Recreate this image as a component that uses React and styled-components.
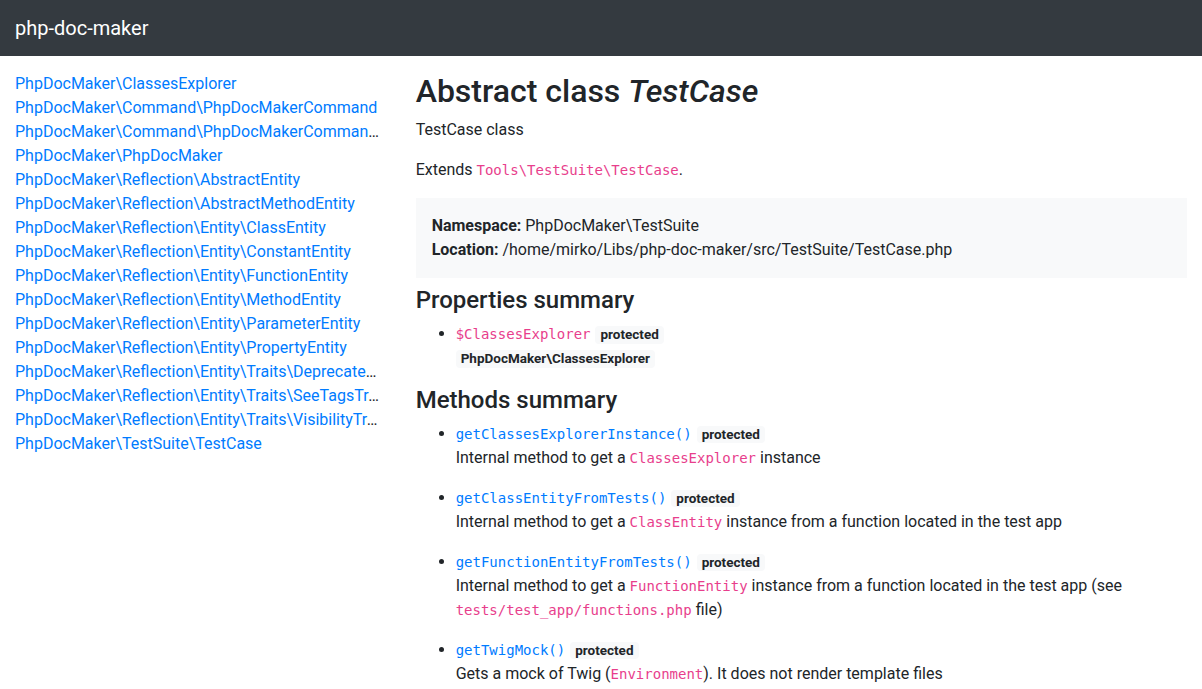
import styled, { createGlobalStyle } from "styled-components";

const GlobalStyle = createGlobalStyle`
html, body {
    margin: 0;
    padding: 0;
}
body {
    font-family: Roboto, "Liberation Sans", sans-serif;
    font-size: 16px;
    line-height: 1.5;
    color: #212529;
    background: #fff;
}
*, *::before, *::after {
    box-sizing: border-box;
}
`;

const classes = [
    "PhpDocMaker\\ClassesExplorer",
    "PhpDocMaker\\Command\\PhpDocMakerCommand",
    "PhpDocMaker\\Command\\PhpDocMakerCommandOptions",
    "PhpDocMaker\\PhpDocMaker",
    "PhpDocMaker\\Reflection\\AbstractEntity",
    "PhpDocMaker\\Reflection\\AbstractMethodEntity",
    "PhpDocMaker\\Reflection\\Entity\\ClassEntity",
    "PhpDocMaker\\Reflection\\Entity\\ConstantEntity",
    "PhpDocMaker\\Reflection\\Entity\\FunctionEntity",
    "PhpDocMaker\\Reflection\\Entity\\MethodEntity",
    "PhpDocMaker\\Reflection\\Entity\\ParameterEntity",
    "PhpDocMaker\\Reflection\\Entity\\PropertyEntity",
    "PhpDocMaker\\Reflection\\Entity\\Traits\\DeprecatedTrait",
    "PhpDocMaker\\Reflection\\Entity\\Traits\\SeeTagsTrait",
    "PhpDocMaker\\Reflection\\Entity\\Traits\\VisibilityTrait",
    "PhpDocMaker\\TestSuite\\TestCase",
];

const App = () => {
    return (
        <>
            <GlobalStyle />
            <Navbar>
                <Brand href="#">php-doc-maker</Brand>
            </Navbar>
            <Container>
                <Sidebar>
                    {classes.map((name) => (
                        <SideItem key={name}>
                            <SideLink href="#">{name}</SideLink>
                        </SideItem>
                    ))}
                </Sidebar>
                <Main>
                    <Title>Abstract class <em>TestCase</em></Title>
                    <P>TestCase class</P>
                    <P>Extends <Code>Tools\TestSuite\TestCase</Code>.</P>
                    <InfoBox>
                        <div><b>Namespace:</b> PhpDocMaker\TestSuite</div>
                        <div><b>Location:</b> /home/mirko/Libs/php-doc-maker/src/TestSuite/TestCase.php</div>
                    </InfoBox>

                    <Heading>Properties summary</Heading>
                    <List>
                        <li>
                            <Code>$ClassesExplorer</Code> <Badge>protected</Badge>
                            <div><Badge>PhpDocMaker\ClassesExplorer</Badge></div>
                        </li>
                    </List>

                    <Heading>Methods summary</Heading>
                    <List>
                        <li>
                            <MethodLink href="#"><Code>getClassesExplorerInstance()</Code></MethodLink> <Badge>protected</Badge>
                            <Desc>Internal method to get a <Code>ClassesExplorer</Code> instance</Desc>
                        </li>
                        <li>
                            <MethodLink href="#"><Code>getClassEntityFromTests()</Code></MethodLink> <Badge>protected</Badge>
                            <Desc>Internal method to get a <Code>ClassEntity</Code> instance from a function located in the test app</Desc>
                        </li>
                        <li>
                            <MethodLink href="#"><Code>getFunctionEntityFromTests()</Code></MethodLink> <Badge>protected</Badge>
                            <Desc>Internal method to get a <Code>FunctionEntity</Code> instance from a function located in the test app (see <Code>tests/test_app/functions.php</Code> file)</Desc>
                        </li>
                        <li>
                            <MethodLink href="#"><Code>getTwigMock()</Code></MethodLink> <Badge>protected</Badge>
                            <Desc>Gets a mock of Twig (<Code>Environment</Code>). It does not render template files</Desc>
                        </li>
                    </List>
                </Main>
            </Container>
        </>
    );
}

const Navbar = styled.nav`
height: 56px;
background: #343a40;
display: flex;
align-items: center;
padding: 0 15px;
`;

const Brand = styled.a`
color: #fff;
font-size: 20px;
line-height: 30px;
text-decoration: none;
`;

const Container = styled.div`
display: grid;
grid-template-columns: 33.3333% 66.6667%;
margin-top: 16px;
`;

const Sidebar = styled.div`
padding: 0 21px 0 15px;
min-width: 0;
`;

const SideItem = styled.div`
white-space: nowrap;
overflow: hidden;
text-overflow: ellipsis;
color: #212529;
`;

const SideLink = styled.a`
color: #007bff;
text-decoration: none;
`;

const Main = styled.div`
padding: 0 15px;
min-width: 0;
`;

const Title = styled.h1`
font-size: 32px;
font-weight: 500;
line-height: 1.2;
margin: 0 0 8px;
`;

const Heading = styled.h2`
font-size: 24px;
font-weight: 500;
line-height: 1.2;
margin: 0 0 7px;
`;

const P = styled.p`
margin: 0 0 16px;
`;

const Code = styled.code`
font-family: "DejaVu Sans Mono", "Liberation Mono", monospace;
font-size: 14px;
color: #e83e8c;
`;

const InfoBox = styled.div`
background: #f8f9fa;
padding: 16px;
margin-bottom: 8px;
b {
    font-weight: 700;
}
`;

const List = styled.ul`
margin: 0 0 16px;
padding-left: 40px;
`;

const MethodLink = styled.a`
text-decoration: none;
& > ${Code} {
    color: #007bff;
}
`;

const Desc = styled.p`
margin: 0 0 16px;
`;

const Badge = styled.span`
display: inline-block;
padding: 2px 5px;
margin-left: 1px;
font-size: 13.5px;
font-weight: 700;
line-height: 1;
color: #212529;
background: #f8f9fa;
border-radius: 4px;
vertical-align: baseline;
white-space: nowrap;

div > & {
    margin-left: 0;
}
`;

export default App;
